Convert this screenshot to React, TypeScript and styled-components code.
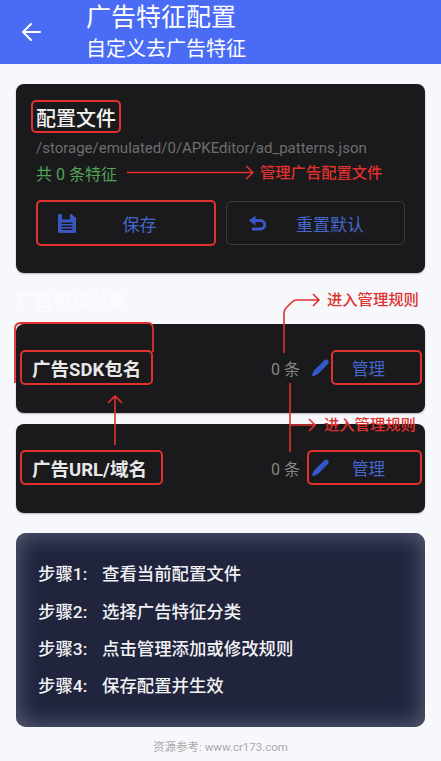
import styled, { createGlobalStyle } from "styled-components";

const GlobalStyle = createGlobalStyle`
  html, body {
    margin: 0;
    padding: 0;
    background: #f7f8fc;
  }
  * {
    box-sizing: border-box;
  }
`;

const Page = styled.div`
  position: relative;
  width: 441px;
  height: 761px;
  overflow: hidden;
  font-family: Roboto, "Noto Sans CJK SC", sans-serif;
  background: #f7f8fc;
`;

const Header = styled.header`
  height: 64px;
  display: flex;
  align-items: center;
  background: #4a6cf5;
  color: #fff;
  padding-left: 21px;
  gap: 45px;
`;

const HeaderText = styled.div`
  display: flex;
  flex-direction: column;
`;

const HeaderTitle = styled.div`
  font-size: 25px;
  line-height: 34px;
`;

const HeaderSub = styled.div`
  font-size: 20px;
  line-height: 28px;
`;

const Content = styled.main`
  padding: 20px 16px 0;
  display: flex;
  flex-direction: column;
`;

const Card = styled.section`
  background: #1a1a1c;
  border-radius: 8px;
  box-shadow: 0 1px 2px rgba(0, 0, 0, 0.25);
`;

const ConfigCard = styled(Card)`
  height: 189px;
  padding: 16px 20px 0 20px;
`;

const Marked = styled.span`
  display: inline-flex;
  align-items: center;
  border: 2px solid #e0312f;
  border-radius: 5px;
`;

const ConfigTitle = styled(Marked)`
  height: 33px;
  margin-left: -5px;
  padding: 2px 3px 0;
  color: #f4f4f4;
  font-size: 20px;
  font-weight: 500;
`;

const PathText = styled.div`
  margin-top: 4px;
  color: #6e6e6e;
  font-size: 15px;
  line-height: 22px;
  white-space: nowrap;
`;

const CountText = styled.div`
  margin-top: 5px;
  color: #53a257;
  font-size: 16px;
  line-height: 22px;
`;

const ButtonRow = styled.div`
  margin-top: 14px;
  display: flex;
  align-items: center;
  gap: 10px;
`;

const ActionButton = styled.div<{ $marked?: boolean }>`
  flex: ${(p) => (p.$marked ? "0 0 180px" : "1")};
  height: ${(p) => (p.$marked ? 46 : 44)}px;
  display: flex;
  align-items: center;
  padding-left: ${(p) => (p.$marked ? 20 : 22)}px;
  border-radius: 5px;
  border: ${(p) => (p.$marked ? "2px solid #e0312f" : "1px solid #3a3a3c")};
  color: #4566cc;
  font-size: 17px;
`;

const ButtonLabel = styled.span`
  flex: 1;
  text-align: center;
  padding-right: 11px;
`;

const SectionTitle = styled.h2`
  margin: 17px 0 12px 0;
  height: 22px;
  color: #fcfcfe;
  font-size: 18.5px;
  line-height: 22px;
  font-weight: 700;
`;

const RuleCard = styled(Card)<{ $last?: boolean }>`
  height: 89px;
  margin-bottom: ${(p) => (p.$last ? 20 : 11)}px;
  display: flex;
  align-items: center;
  padding: 0 3px 3px 4px;
`;

const RuleName = styled(Marked)<{ $width: number }>`
  width: ${(p) => p.$width}px;
  height: 35px;
  padding: 1px 0 0 10px;
  color: #e8e8e8;
  font-size: 18.5px;
  font-weight: 700;
  white-space: nowrap;
`;

const RuleCount = styled.span`
  margin-left: auto;
  padding-top: 1px;
  color: #858585;
  font-size: 16px;
`;

const ManageBox = styled.div<{ $wide?: boolean }>`
  display: flex;
  align-items: center;
  width: 115px;
  height: 35px;
  margin-left: 7px;
  border-radius: 5px;
  border: ${(p) => (p.$wide ? "2px solid #e0312f" : "none")};
  padding-left: ${(p) => (p.$wide ? 3 : 5)}px;
`;

const ManageLabel = styled(Marked)<{ $bare?: boolean }>`
  width: ${(p) => (p.$bare ? 88 : 91)}px;
  height: ${(p) => (p.$bare ? 31 : 35)}px;
  margin-left: auto;
  justify-content: center;
  padding: 1px ${(p) => (p.$bare ? 15 : 16)}px 0 0;
  border-color: ${(p) => (p.$bare ? "transparent" : "#e0312f")};
  color: #4566cc;
  font-size: 16.5px;
`;

const StepsCard = styled.section`
  height: 194px;
  padding: 21px 21px 0 22px;
  border-radius: 10px;
  background: #20243d;
  box-shadow: inset 0 0 22px 2px #5a5d76;
`;

const StepLine = styled.div`
  display: flex;
  height: 37.4px;
  align-items: center;
  color: #f2f2f4;
  font-size: 17.4px;
  font-weight: 500;
  white-space: nowrap;
`;

const StepLabel = styled.span`
  width: 64px;
`;

const Footer = styled.footer`
  margin-top: 11px;
  text-align: center;
  color: #aaa;
  font-size: 11.5px;
  line-height: 18px;
`;

/* red notes drawn over the screenshot */
const NoteLayer = styled.svg`
  position: absolute;
  left: 0;
  top: 0;
  pointer-events: none;
`;

const Note = styled.span<{ $x: number; $y: number }>`
  position: absolute;
  left: ${(p) => p.$x}px;
  top: ${(p) => p.$y}px;
  color: #e0312f;
  font-size: 15.3px;
  line-height: 20px;
  font-weight: 500;
  white-space: nowrap;
`;

const BackIcon = () => (
  <svg width="20" height="20" viewBox="0 0 20 20" fill="none" stroke="#fff" strokeWidth="2" strokeLinecap="round" strokeLinejoin="round">
    <path d="M19 10H2M10 2l-8 8 8 8" />
  </svg>
);

const SaveIcon = () => (
  <svg width="18" height="19" viewBox="0 0 18 19" fill="#3a57c4">
    <path
      fillRule="evenodd"
      d="M1.500 0H4V5.500H12V0H13.500L18 4V17.500A1.500 1.500 0 0 1 16.500 19H1.500A1.500 1.500 0 0 1 0 17.500V1.500A1.500 1.500 0 0 1 1.500 0ZM3.500 8.500V10H14.500V8.500ZM3.500 11.500V13H14.500V11.500ZM3.500 14.500V16H14.500V14.500Z"
    />
  </svg>
);

const UndoIcon = () => (
  <svg width="18" height="16" viewBox="0 0 18 16" fill="none" stroke="#3a57c4" strokeWidth="3">
    <path d="M4 5.500H11.500a4.200 4.200 0 0 1 0 8.400H3" />
    <path d="M6.500 .5L0 5.500 6.500 10.500z" fill="#3a57c4" stroke="none" />
  </svg>
);

const PenIcon = () => (
  <svg width="17" height="17" viewBox="0 0 17 17" fill="#3558c8">
    <path d="M12.600 1C14 -.2 16.400 1.100 16.700 2.600 17 3.700 16 4.800 15.200 5.800L7 14C5.400 15.600 3.200 16.800 1.200 17 .4 17.100 0 16.700.1 16 .5 14.200 1.500 12.200 3 10.600Z" />
  </svg>
);

const Notes = () => (
  <NoteLayer width="441" height="761" viewBox="0 0 441 761" fill="none" stroke="#e0312f" strokeWidth="1.6">
    <path d="M127 172.500H253M246 166l7 6.500-7 6.500" />
    <path d="M284 353V313Q284 310 286 308L292 302Q294 300 297 300H319M313 294l6 6-6 6" />
    <path d="M290 383V452M290 425H316M309 419l6 6-6 6" />
    <path d="M115 445V396M108 403l7-7 7 7" />
    <path d="M15 383V329Q15 323 21 323H148Q153 323 153 329V352" strokeWidth="1.8" />
  </NoteLayer>
);

const rules = [
  { name: "广告SDK包名", wide: false, nameWidth: 133 },
  { name: "广告URL/域名", wide: true, nameWidth: 143 },
];

const steps = ["查看当前配置文件", "选择广告特征分类", "点击管理添加或修改规则", "保存配置并生效"];

export default function App() {
  return (
    <Page>
      <GlobalStyle />
      <Header>
        <BackIcon />
        <HeaderText>
          <HeaderTitle>广告特征配置</HeaderTitle>
          <HeaderSub>自定义去广告特征</HeaderSub>
        </HeaderText>
      </Header>
      <Content>
        <ConfigCard>
          <ConfigTitle>配置文件</ConfigTitle>
          <PathText>/storage/emulated/0/APKEditor/ad_patterns.json</PathText>
          <CountText>共 0 条特征</CountText>
          <ButtonRow>
            <ActionButton $marked>
              <SaveIcon />
              <ButtonLabel>保存</ButtonLabel>
            </ActionButton>
            <ActionButton>
              <UndoIcon />
              <ButtonLabel>重置默认</ButtonLabel>
            </ActionButton>
          </ButtonRow>
        </ConfigCard>
        <SectionTitle>广告特征分类</SectionTitle>
        {rules.map((rule, i) => (
          <RuleCard key={rule.name} $last={i === rules.length - 1}>
            <RuleName $width={rule.nameWidth}>{rule.name}</RuleName>
            <RuleCount>0 条</RuleCount>
            <ManageBox $wide={rule.wide}>
              <PenIcon />
              <ManageLabel $bare={rule.wide}>管理</ManageLabel>
            </ManageBox>
          </RuleCard>
        ))}
        <StepsCard>
          {steps.map((step, i) => (
            <StepLine key={step}>
              <StepLabel>步骤{i + 1}:</StepLabel>
              {step}
            </StepLine>
          ))}
        </StepsCard>
        <Footer>资源参考: www.cr173.com</Footer>
      </Content>
      <Notes />
      <Note $x={260} $y={163}>管理广告配置文件</Note>
      <Note $x={327} $y={290}>进入管理规则</Note>
      <Note $x={324} $y={415}>进入管理规则</Note>
    </Page>
  );
}
